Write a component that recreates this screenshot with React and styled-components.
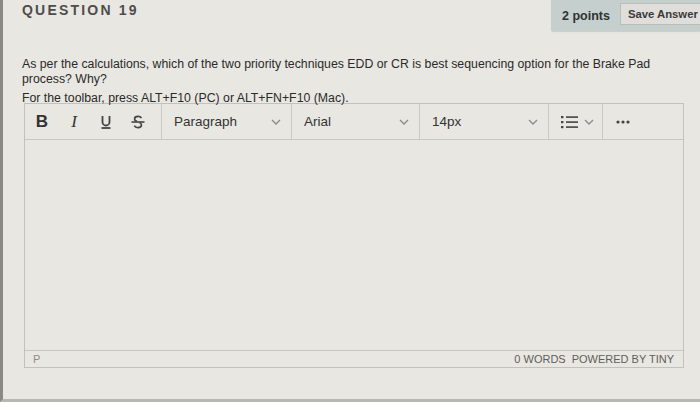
import React from 'react';
import styled, { createGlobalStyle } from 'styled-components';

const Global = createGlobalStyle`
  html, body {
    margin: 0;
    padding: 0;
    background: #e9e7e2;
  }
  body {
    font-family: "Liberation Sans", Arial, sans-serif;
    color: #2b2b2b;
  }
`;

const Page = styled.div`
  width: 700px;
  height: 402px;
  box-sizing: border-box;
  background: #e9e7e2;
  border-left: 3px solid #8a8986;
  border-bottom: 3px solid #b9b7b2;
  overflow: hidden;
`;

const Header = styled.div`
  display: flex;
  justify-content: space-between;
  align-items: flex-start;
  height: 31px;
`;

const QuestionTitle = styled.h2`
  margin: 0;
  padding: 2px 0 0 19px;
  font-size: 14px;
  font-weight: 700;
  letter-spacing: 2.2px;
  color: #4e4d4b;
`;

const PointsBox = styled.div`
  display: flex;
  align-items: center;
  gap: 10px;
  height: 31px;
  padding-left: 11px;
  width: 149px;
  box-sizing: border-box;
  background: #c4cfce;
  border-bottom-left-radius: 2px;
  box-shadow: 0 1px 1px rgba(0, 0, 0, 0.12);
`;

const Points = styled.span`
  font-size: 12.5px;
  font-weight: 700;
  white-space: nowrap;
  color: #2f3333;
`;

const SaveButton = styled.button`
  flex: none;
  width: 84px;
  height: 22px;
  margin-top: -4px;
  padding: 0 0 0 7px;
  text-align: left;
  white-space: nowrap;
  border: 1px solid #bdbcb8;
  border-right: none;
  background: #e0deda;
  font-family: "Liberation Sans", Arial, sans-serif;
  font-size: 11.3px;
  font-weight: 700;
  color: #3a3a3a;
`;

const Body = styled.div`
  padding: 26px 0 0 19px;
`;

const Question = styled.p`
  margin: 0;
  width: 655px;
  font-size: 12.3px;
  line-height: 14.5px;
  color: #2a2a2a;
`;

const Hint = styled.p`
  margin: 6px 0 -2px;
  font-size: 12.3px;
  line-height: 13px;
  color: #2a2a2a;
`;

const Editor = styled.div`
  margin: 0 0 0 2px;
  width: 660px;
  height: 265px;
  box-sizing: border-box;
  border: 1px solid #c3c1bc;
  display: flex;
  flex-direction: column;
`;

const Toolbar = styled.div`
  display: flex;
  height: 35px;
  border-bottom: 1px solid #c9c7c2;
`;

const Group = styled.div`
  display: flex;
  align-items: center;
  width: ${p => p.w}px;
  padding: ${p => p.pad || '0 10px 0 12px'};
  box-sizing: border-box;
  border-right: ${p => (p.last ? 'none' : '1px solid #cac8c3')};
  justify-content: ${p => p.justify || 'space-between'};
`;

const Fmt = styled.span`
  width: 32px;
  display: flex;
  justify-content: center;
  font-size: 17px;
  color: #333;
  font-family: ${p => (p.serif ? '"Liberation Serif", serif' : '"Liberation Sans", Arial, sans-serif')};
  font-style: ${p => (p.serif ? 'italic' : 'normal')};
  font-weight: ${p => (p.bold ? 700 : 400)};
`;

const Label = styled.span`
  font-size: 13.5px;
  color: #333;
`;

const Chevron = () => (
  <svg width="10" height="6" viewBox="0 0 10 6">
    <path d="M1 1l4 4 4-4" fill="none" stroke="#8a8a8a" strokeWidth="1.3" />
  </svg>
);

const Underline = () => (
  <svg width="14" height="16" viewBox="0 0 14 16">
    <path d="M3.5 2v6a3.5 3.5 0 0 0 7 0V2" fill="none" stroke="#444" strokeWidth="1.8" />
    <path d="M2.5 14h9" stroke="#444" strokeWidth="1.8" />
  </svg>
);

const Strike = () => (
  <svg width="16" height="16" viewBox="0 0 16 16">
    <path d="M11.5 4.2C10.8 3 9.6 2.4 8 2.4c-2 0-3.4 1-3.4 2.5 0 1.2.8 1.9 2.5 2.3" fill="none" stroke="#444" strokeWidth="1.6" />
    <path d="M9.5 8.8c1.4.5 2 1.2 2 2.2 0 1.6-1.5 2.6-3.6 2.6-1.7 0-3-.7-3.6-2" fill="none" stroke="#444" strokeWidth="1.6" />
    <path d="M1.5 8h13" stroke="#444" strokeWidth="1.6" />
  </svg>
);

const ListIcon = () => (
  <svg width="18" height="14" viewBox="0 0 18 14">
    <g fill="#444">
      <rect x="0" y="1" width="2.4" height="2.2" />
      <rect x="0" y="6" width="2.4" height="2.2" />
      <rect x="0" y="11" width="2.4" height="2.2" />
      <rect x="5" y="1.3" width="12" height="1.6" />
      <rect x="5" y="6.3" width="12" height="1.6" />
      <rect x="5" y="11.3" width="12" height="1.6" />
    </g>
  </svg>
);

const Dots = () => (
  <svg width="14" height="4" viewBox="0 0 14 4">
    <g fill="#444">
      <circle cx="2" cy="2" r="1.6" />
      <circle cx="7" cy="2" r="1.6" />
      <circle cx="12" cy="2" r="1.6" />
    </g>
  </svg>
);

const Content = styled.div`
  flex: 1;
`;

const StatusBar = styled.div`
  display: flex;
  justify-content: space-between;
  align-items: center;
  height: 16px;
  padding: 0 9px 0 8px;
  border-top: 1px solid #c9c7c2;
  font-size: 11px;
  color: #5f5e5b;
`;

const Path = styled.span`
  color: #8d8c89;
`;

const Counts = styled.span`
  display: flex;
  gap: 6px;
`;

export default function App() {
  return (
    <Page>
      <Global />
      <Header>
        <QuestionTitle>QUESTION 19</QuestionTitle>
        <PointsBox>
          <Points>2 points</Points>
          <SaveButton>Save Answer</SaveButton>
        </PointsBox>
      </Header>
      <Body>
        <Question>
          As per the calculations, which of the two priority techniques EDD or CR is best sequencing option for the Brake Pad process? Why?
        </Question>
        <Hint>For the toolbar, press ALT+F10 (PC) or ALT+FN+F10 (Mac).</Hint>
        <Editor>
          <Toolbar>
            <Group w={137} pad="0 1px" justify="flex-start">
              <Fmt bold>B</Fmt>
              <Fmt serif>I</Fmt>
              <Fmt><Underline /></Fmt>
              <Fmt><Strike /></Fmt>
            </Group>
            <Group w={130}>
              <Label>Paragraph</Label>
              <Chevron />
            </Group>
            <Group w={128}>
              <Label>Arial</Label>
              <Chevron />
            </Group>
            <Group w={129}>
              <Label>14px</Label>
              <Chevron />
            </Group>
            <Group w={54} pad="0 8px 0 12px">
              <ListIcon />
              <Chevron />
            </Group>
            <Group w={80} last justify="flex-start" pad="0 13px">
              <Dots />
            </Group>
          </Toolbar>
          <Content />
          <StatusBar>
            <Path>P</Path>
            <Counts>
              <span>0 WORDS</span>
              <span>POWERED BY TINY</span>
            </Counts>
          </StatusBar>
        </Editor>
      </Body>
    </Page>
  );
}
